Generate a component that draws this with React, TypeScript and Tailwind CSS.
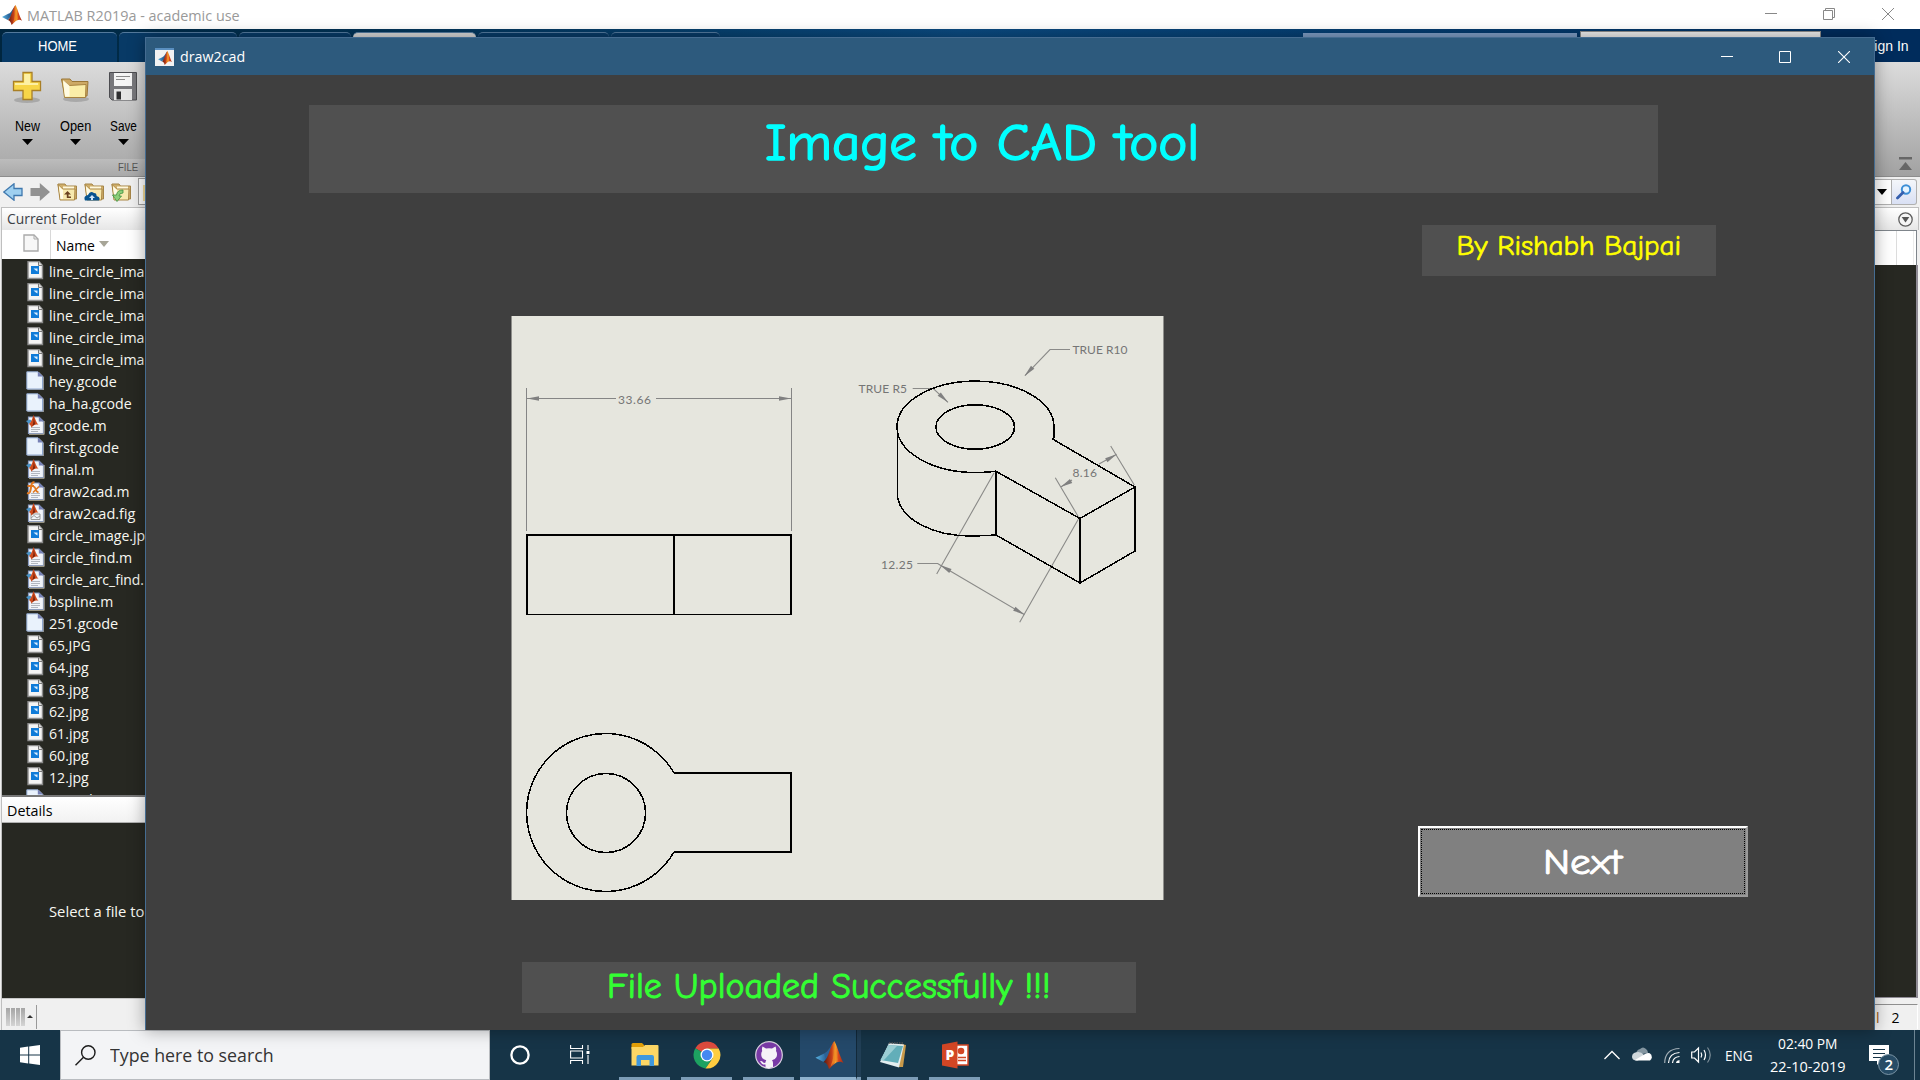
import React, { useLayoutEffect, useRef, useState } from "react";

/* Text stretched horizontally to a given width. */
function Fit({ w, className = "", children }: { w: number; className?: string; children: string }) {
  const ref = useRef<HTMLSpanElement>(null);
  const [k, setK] = useState(1);
  useLayoutEffect(() => {
    if (ref.current) setK(w / ref.current.offsetWidth);
  }, [w, children]);
  return (
    <span className={`block whitespace-nowrap ${className}`} style={{ width: w }}>
      <span ref={ref} className="inline-block origin-left" style={{ transform: `scaleX(${k})` }}>
        {children}
      </span>
    </span>
  );
}

function MatlabLogo({ className }: { className: string }) {
  return (
    <svg viewBox="0 0 26 26" className={className}>
      <defs>
        <linearGradient id="peak" x1="0" x2="1">
          <stop offset="0" stopColor="#5a1a10" />
          <stop offset=".42" stopColor="#c8401a" />
          <stop offset=".6" stopColor="#f6a62c" />
          <stop offset=".75" stopColor="#d9481c" />
          <stop offset="1" stopColor="#a02a14" />
        </linearGradient>
        <linearGradient id="wing" x1="0" x2="1">
          <stop offset="0" stopColor="#58b4e4" />
          <stop offset="1" stopColor="#1f4f86" />
        </linearGradient>
      </defs>
      <path d="M0 15.5 L8 11.5 L12 14 L7.5 19.5 Z" fill="url(#wing)" />
      <path d="M8 11.5 C12 10.5 14 4 17 1.5 L14 12 L9.5 17 Z" fill="#2c6296" />
      <path d="M17.5 0 C20 4 22.5 14 26 20.5 C21 17 17.5 21 12.5 26 C11.5 22 9.8 20 7.5 19.5 C12 17 14 3 17.5 0 Z" fill="url(#peak)" />
      <path d="M17.5 0.5 C18 8 17 16 14 24 C17 20 19 18 20.5 17.8 C19 12 18.6 5 17.5 .5 Z" fill="#f08a24" opacity=".75" />
    </svg>
  );
}

function FileIcon({ kind }: { kind: string }) {
  if (kind === "jpg")
    return (
      <svg viewBox="0 0 19 20" className="h-5 w-[19px] shrink-0">
        <path d="M2 .5 H13 L16.500 4.500 V17.500 H2 Z" fill="#f4f4f4" stroke="#8c8c8c" strokeWidth="1.4" />
        <path d="M12.5 .5 V4.500 H16.500" fill="#ddd" stroke="#777" />
        <rect x="5" y="5" width="8" height="8" fill="#0f7bd8" />
        <path d="M7.500 7.5 H11.5 V10.500 L9.8 9.5 Z" fill="#d8edff" />
      </svg>
    );
  if (kind === "doc")
    return (
      <svg viewBox="0 0 19 20" className="h-5 w-[19px] shrink-0">
        <path d="M13 1 L18 6 V19 H1.5 V18 H16 Z" fill="#8f9294" />
        <path d="M.8 .8 H12 L16.5 5.3 V18 H.8 Z" fill="#e9f2fc" stroke="#8ea6cc" strokeWidth="1" />
        <path d="M11.8 .5 V5.6 H17 Z" fill="#7680b4" />
      </svg>
    );
  return (
    <svg viewBox="0 0 19 20" className="h-5 w-[19px] shrink-0">
      <path d="M2.5 2 H13 L17.5 6.5 V18.5 H2.5 Z" fill="#f1f4f9" stroke="#8a9cc0" strokeWidth="1.2" />
      <path d="M18.2 6 V19.4 H3" fill="none" stroke="#a5a08e" />
      <path d="M12.8 1.6 V6.6 H18 Z" fill="#7680b4" />
      {kind === "fig" ? (
        <path d="M5 11 H14 V16.5 H5 Z M5 15 L8 12.5 L11 15 L14 13" fill="none" stroke="#9a9a9a" />
      ) : (
        <path d="M5 12.5 H14 M5 14.5 H14 M5 16.5 H12" stroke="#aab0b8" strokeWidth=".9" />
      )}
      {kind === "fx" ? (
        <g fill="none" stroke="#e07820" strokeWidth="2">
          <path d="M8.5 1.5 C5 .5 5.5 5 4.5 9 Q4 13 1 12 M1.5 5 H8" />
          <path d="M7 5.5 Q9 5.5 9.5 8 T12.5 11.5 M13 5.5 L7 11.5" strokeWidth="1.6" />
        </g>
      ) : (
        <g>
          <path d="M0 6 L4 4.5 L6 6 L3 9 Z" fill="#4a94c8" />
          <path d="M7.5 0 C9 3 10.5 8 12.5 10 C9.5 8.8 7.5 10.5 5.5 12.5 Q4.6 9.6 3 9 C6 7 6.5 2 7.5 0 Z" fill="#cf4a1c" />
          <path d="M7.5 1 C8 4 7.5 8 6.5 11 L9 9 Z" fill="#70220f" />
        </g>
      )}
    </svg>
  );
}

const files: [string, string, number][] = [
  ["jpg", "line_circle_ima", 95],
  ["jpg", "line_circle_ima", 95],
  ["jpg", "line_circle_ima", 95],
  ["jpg", "line_circle_ima", 95],
  ["jpg", "line_circle_ima", 95],
  ["doc", "hey.gcode", 68],
  ["doc", "ha_ha.gcode", 83],
  ["m", "gcode.m", 58],
  ["doc", "first.gcode", 70],
  ["m", "final.m", 45],
  ["fx", "draw2cad.m", 81],
  ["fig", "draw2cad.fig", 86],
  ["jpg", "circle_image.jp", 96],
  ["m", "circle_find.m", 83],
  ["m", "circle_arc_find.", 95],
  ["m", "bspline.m", 64],
  ["doc", "251.gcode", 69],
  ["jpg", "65.JPG", 42],
  ["jpg", "64.jpg", 40],
  ["jpg", "63.jpg", 40],
  ["jpg", "62.jpg", 40],
  ["jpg", "61.jpg", 40],
  ["jpg", "60.jpg", 40],
  ["jpg", "12.jpg", 40],
  ["doc", "5.gcode", 52],
];

function Caret() {
  return (
    <svg viewBox="0 0 11 6" className="h-1.5 w-[11px]">
      <path d="M0 0 H11 L5.5 6 Z" fill="#000" />
    </svg>
  );
}

function FolderShape() {
  return (
    <g>
      <path d="M1 2 H8 L9.5 4 H19.5 V17 H3.5 Z" fill="#cfae6b" stroke="#a58548" />
      <path d="M6 4.500 H17 V10 H6 Z" fill="#fff9dd" />
      <path d="M1 2.5 L5.5 7 H18 L17.5 18 H3 Z" fill="#f7e9ae" stroke="#a98544" />
      <path d="M2 4 L6 8 V17 H3.500 Z" fill="#fffbe6" />
    </g>
  );
}

function ToolButton({ label, w, children }: { label: string; w: number; children: React.ReactNode }) {
  return (
    <div className="flex w-12 shrink-0 flex-col items-center">
      <svg viewBox="0 0 30 34" className="h-[34px] w-[30px]">{children}</svg>
      <Fit w={w} className="mt-[13px] h-5 font-['Liberation_Sans'] text-[14px] leading-5 text-black">{label}</Fit>
      <div className="mt-[3px]"><Caret /></div>
    </div>
  );
}

function LeftColumn() {
  return (
    <div className="flex w-[145px] flex-col overflow-hidden bg-[#f0f0f0]">
      <div className="h-[97px] shrink-0 bg-gradient-to-b from-[#dcdcdc] to-[#adadad] pt-[7px]">
        <div className="flex w-36 pl-[3px]">
          <ToolButton label="New" w={25}>
            <ellipse cx="15" cy="31" rx="13" ry="3" fill="#000" opacity=".16" />
            <path d="M11 3.5 H20 V12.5 H28.5 V21.5 H20 V30.5 H11 V21.5 H1.5 V12.5 H11 Z" fill="#f7d548" stroke="#a97f26" strokeWidth="1.3" />
            <path d="M12.2 5 H18 V14 H26 V16 H3 V14 H12.2 Z" fill="#fdf0a4" />
          </ToolButton>
          <ToolButton label="Open" w={31}>
            <ellipse cx="16" cy="30" rx="13" ry="3" fill="#000" opacity=".16" />
            <path d="M1.5 10 H10 L12 12.5 H28 L27 27 H5 Z" fill="#cda965" stroke="#9a7636" />
            <path d="M2 10.5 L9 16.5 L26 15.5 L25.5 28.5 H4.5 Z" fill="#fbeea8" stroke="#a88340" />
            <path d="M3 11 L9.5 16.8 V27.5 H5 Z" fill="#fffbe2" />
          </ToolButton>
          <ToolButton label="Save" w={27}>
            <path d="M1.5 3.5 H28.5 V31 H4 L1.5 28.5 Z" fill="#77777b" stroke="#4c4c50" />
            <rect x="6" y="4" width="18" height="13" fill="#f5f5f5" />
            <path d="M8 7.5 H22 M8 10.5 H17" stroke="#8a8a8a" />
            <rect x="6" y="20" width="18" height="11" fill="#e4e4e4" />
            <rect x="8.500" y="22.500" width="4.500" height="8" fill="#2e2e30" />
          </ToolButton>
        </div>
      </div>
      <div className="flex h-[18px] shrink-0 justify-end border-b border-[#8d8d8d] bg-gradient-to-b from-[#bcbcbc] to-[#a9a9a9] pr-[7px]">
        <Fit w={20} className="font-['Liberation_Sans'] text-[11.500px] leading-[17px] text-[#555]">FILE</Fit>
      </div>
      <div className="flex h-[30px] shrink-0 items-center pb-px pl-[3px]">
        <svg viewBox="0 0 20 18" className="h-[18px] w-5 shrink-0"><path d="M.8 9 L11 .8 V5.500 H19 V12.500 H11 V17.200 Z" fill="#9fd0f0" stroke="#3f78ae" strokeWidth="1.300" /></svg>
        <svg viewBox="0 0 20 18" className="ml-[7px] h-[18px] w-5 shrink-0"><path d="M20 9 L9.800 0 V5 H.5 V13 H9.800 V18 Z" fill="#929292" /></svg>
        <svg viewBox="0 0 20 20" className="ml-[7px] h-5 w-5 shrink-0"><FolderShape /><path d="M10.500 9 L7 12.500 H9.800 V16 H14 V14.500 H11.500 V12.500 H14 Z" fill="#6b4220" /></svg>
        <svg viewBox="0 0 20 20" className="ml-[7px] h-5 w-5 shrink-0"><FolderShape /><path d="M1 18.500 Q-1 14 4 13 Q6 8.500 10 11 Q13 11 12.500 14 Q17 15 15 18.500 Z" fill="#07548f" /><path d="M8 13 L5 16 H7 V18 H9 V16 H11 Z" fill="#cfe6f7" /></svg>
        <svg viewBox="0 0 20 20" className="ml-[7px] h-5 w-5 shrink-0"><FolderShape /><path d="M12 8 Q6 8 5.500 13 H1.500 L6 19.500 L10.500 14 H8 Q8 11 12 11 Z" fill="#8cce78" stroke="#3f8e40" strokeWidth=".8" /></svg>
        <div className="ml-[7px] h-[27px] w-3 shrink-0 border border-[#9e9e9e] bg-white pl-1"><div className="mt-1.5 h-4 w-2 bg-[#f3dc9a]" /></div>
      </div>
      <div className="ml-px flex flex-1 flex-col border-l border-t border-[#bfbfbf]">
        <div className="h-[22px] shrink-0 bg-gradient-to-b from-white to-[#e6e6e6] pl-[5px]">
          <Fit w={94} className="font-['Open_Sans'] text-[14px] leading-[22px] text-[#3b3f46]">Current Folder</Fit>
        </div>
        <div className="flex h-[29px] shrink-0 bg-white">
          <div className="flex w-[49px] items-center justify-end border-r border-[#d8d8d8] pb-1 pr-[11px]">
            <svg viewBox="0 0 16 18" className="h-[18px] w-4"><path d="M1 1 H11 L15 5 V17 H1 Z" fill="#f7f7f7" stroke="#ababab" strokeWidth="1.400" /><path d="M11 1 V5 H15" fill="none" stroke="#ababab" /></svg>
          </div>
          <Fit w={39} className="ml-[5px] mt-1 font-['Open_Sans'] text-[15px] leading-[23px] text-black">Name</Fit>
          <svg viewBox="0 0 10 6" className="ml-1 mt-[11px] h-1.5 w-[10px]"><path d="M0 0 H10 L5 6 Z" fill="#a7a597" /></svg>
        </div>
        <div className="h-[536px] shrink-0 overflow-hidden bg-[#272822] pt-0.5">
          {files.map(([kind, name, w], i) => (
            <div key={i} className="flex h-[22px] pl-6">
              <FileIcon kind={kind} />
              <Fit w={w} className="ml-1 font-['Open_Sans'] text-[14.500px] leading-[22px] text-[#f8f8f2]">{name}</Fit>
            </div>
          ))}
        </div>
        <div className="h-[28px] shrink-0 border-b border-[#b0b0b0] border-t-2 border-t-[#777] bg-gradient-to-b from-white to-[#f2f2f2] pl-[5px]">
          <Fit w={46} className="font-['Open_Sans'] text-[14px] leading-[27px] text-black">Details</Fit>
        </div>
        <div className="flex h-[175px] shrink-0 bg-[#272822] pl-[47px] pt-[78px]">
          <Fit w={95} className="font-['Open_Sans'] text-[14px] leading-[22px] text-[#f8f8f2]">Select a file to</Fit>
        </div>
        <div className="flex h-[32px] items-center border-t border-[#c8c8c8] bg-[#f0f0f0] pl-1 pt-1">
          <div className="flex h-[18px] gap-px">
            {[0, 1, 2, 3].map((i) => <div key={i} className="w-1 bg-gradient-to-b from-[#a5a5a5] to-[#d5d5d5]" />)}
          </div>
          <svg viewBox="0 0 6 3" className="ml-[2px] h-[3px] w-1.5"><path d="M0 3 H6 L3 0 Z" fill="#333" /></svg>
          <div className="ml-[3px] h-6 w-px bg-[#999]" />
        </div>
      </div>
    </div>
  );
}

function RightColumn() {
  return (
    <div className="flex w-[45px] flex-col overflow-hidden bg-[#f0f0f0]">
      <div className="flex h-[115px] shrink-0 items-end justify-end border-b border-[#8d8d8d] bg-gradient-to-b from-[#dcdcdc] to-[#a2a2a2] pb-1.5 pr-2">
        <svg viewBox="0 0 13 13" className="h-[13px] w-[13px]"><path d="M0 0 H13 V2.500 H0 Z M6.500 5 L13 13 H0 Z" fill="#666" /></svg>
      </div>
      <div className="flex h-[30px] shrink-0 pr-[3px] pt-0.5">
        <div className="flex h-[26px] w-[17px] items-center border-y border-r border-[#b0b0b0] bg-white pl-0.5">
          <svg viewBox="0 0 10 6" className="h-1.5 w-[10px]"><path d="M0 0 H10 L5 6 Z" fill="#000" /></svg>
        </div>
        <div className="flex h-[26px] flex-1 items-center justify-center rounded-r-[3px] border-y border-r border-[#b0b0b0] bg-gradient-to-b from-[#f4f6fa] to-[#d9e0f4]">
          <svg viewBox="0 0 16 16" className="h-4 w-4"><circle cx="10" cy="5.500" r="4.200" fill="#e6f4ff" stroke="#3d8fd6" strokeWidth="2" /><path d="M7 8.500 L1.500 14" stroke="#355fae" strokeWidth="2.800" strokeLinecap="round" /></svg>
        </div>
      </div>
      <div className="mr-px flex h-[23px] shrink-0 items-center justify-end border-r border-t border-[#bfbfbf] bg-gradient-to-b from-white to-[#e6e6e6] pr-[5px]">
        <svg viewBox="0 0 15 15" className="h-[15px] w-[15px]"><circle cx="7.500" cy="7.500" r="6.700" fill="#f5f5f5" stroke="#5c5c5c" strokeWidth="1.300" /><path d="M3.700 5 H11.300 L7.500 10.500 Z" fill="#555" /></svg>
      </div>
      <div className="mr-[3px] flex h-[35px] shrink-0 border-r border-t border-[#7f858b] bg-white pr-0.5">
        <div className="w-[22px] border-r border-[#dcdcdc]" />
        <div className="flex-1 border-r border-[#ececec]" />
      </div>
      <div className="mr-[2px] h-[733px] shrink-0 border-b border-r-2 border-[#8f8b95] bg-[#272822]" />
      <div className="mr-0.5 mt-1.5 flex h-[25px] border-t border-[#8f8f8f] border-r border-r-white bg-[#f0f0f0] pl-px">
        <span className="font-['Open_Sans'] text-[14px] leading-[26px] text-[#a0560c]">l</span>
        <span className="ml-[12px] font-['Open_Sans'] text-[14px] leading-[26px] text-black">2</span>
      </div>
    </div>
  );
}

function Tab({ className }: { className: string }) {
  return <div className={`h-[31px] rounded-t-[5px] border-t border-[#53799c] ${className}`} />;
}

function MatlabWindow() {
  return (
    <div className="flex h-[1030px] flex-col">
      <div className="flex h-[29px] items-center bg-white pl-0.5">
        <MatlabLogo className="h-5 w-5" />
        <Fit w={213} className="ml-[5px] font-['Open_Sans'] text-[15px] leading-[28px] text-[#999]">MATLAB R2019a - academic use</Fit>
        <div className="ml-auto flex items-center pb-px pr-[26px]">
          <svg viewBox="0 0 12 12" className="mr-[46px] h-3 w-3"><path d="M0 5.500 H12" stroke="#888" /></svg>
          <svg viewBox="0 0 12 12" className="mr-[47px] h-3 w-3"><path d="M.5 2.500 H9.500 V11.500 H.5 Z M2.500 2.500 V.5 H11.500 V9.500 H9.500" fill="none" stroke="#888" /></svg>
          <svg viewBox="0 0 12 12" className="h-3 w-3"><path d="M0 0 L12 12 M12 0 L0 12" stroke="#888" /></svg>
        </div>
      </div>
      <div className="flex h-[33px] bg-gradient-to-r from-[#00263f] via-[#0b4a80] to-[#002c5c] pl-0.5 pt-[3px]">
        <div className="flex h-[30px] w-[115px] justify-center rounded-t-[5px] border-t border-[#53799c] bg-[#083a66] pr-[3px]">
          <Fit w={39} className="font-['Liberation_Sans'] text-[14px] leading-[26px] text-white">HOME</Fit>
        </div>
        <Tab className="ml-0.5 w-[118px] bg-[#083a66]" />
        <Tab className="ml-0.5 w-[112px] bg-[#083a66]" />
        <Tab className="ml-0.5 w-[123px] bg-[#d6d6d6]" />
        <Tab className="ml-0.5 w-[131px] bg-[#083a66]" />
        <Tab className="ml-0.5 w-[110px] bg-[#083a66]" />
        <div className="ml-[583px] mt-px h-6 w-[274px] bg-[#7d9cc4]" />
        <div className="ml-[3px] -mt-px h-6 w-[241px] border border-[#8a8a8a] bg-[#ececec]" />
        <div className="ml-auto -mt-[3px] flex h-[33px] w-[99px] justify-end bg-[#002c5c] pr-[11px]">
          <Fit w={44} className="pt-px font-['Liberation_Sans'] text-[14px] leading-[33px] text-white">Sign In</Fit>
        </div>
      </div>
      <div className="flex min-h-0 flex-1">
        <LeftColumn />
        <div className="flex-1 bg-[#272822]" />
        <RightColumn />
      </div>
    </div>
  );
}

/* Filled arrowhead with its tip at (x, y), pointing along angle a in degrees. */
function Arrow({ x, y, a }: { x: number; y: number; a: number }) {
  return <path d="M0 0 L-12 -2.300 L-12 2.300 Z" transform={`translate(${x} ${y}) rotate(${a})`} fill="#808080" />;
}

function Dim({ x, y, w, children }: { x: number; y: number; w: number; children: string }) {
  return (
    <text x={x} y={y} textLength={w} fontFamily="Lato, sans-serif" fontWeight="400" fontSize="12" fill="#757575">
      {children}
    </text>
  );
}

function Drawing() {
  return (
    <svg viewBox="511 316 653 584" className="block h-[584px] w-[653px] bg-[#e6e6de]">
      <path d="M511.500 316 V900 M1163.500 316 V900" stroke="#8f8f8b" shapeRendering="crispEdges" />
      <g fill="none" stroke="#858585" strokeWidth="1" shapeRendering="crispEdges">
        <path d="M526.500 388 V531 M791.500 388 V531" />
        <path d="M527 398.500 H616 M656 398.500 H791" />
      </g>
      <g fill="none" stroke="#8a8a88" strokeWidth="1.100">
        <path d="M994 473 L936.700 574 M1078.300 519.300 L1019.700 622.300 M940 565 L1024.700 614.700" />
        <path d="M917.300 563.500 H937.700 L940 565" />
        <path d="M1110.700 446 L1134.300 485 M1055.300 477.700 L1078.300 516.700 M1116.700 454.300 L1099 464 M1060.700 487 L1072 480" />
        <path d="M1070 349.500 H1050 L1025 375.700 M912.700 388.500 H933.300 L948 402.300" />
      </g>
      <Arrow x={527} y={398.500} a={180} />
      <Arrow x={791} y={398.500} a={0} />
      <Arrow x={940} y={565} a={210} />
      <Arrow x={1024.700} y={614.700} a={30} />
      <Arrow x={1116.700} y={454.300} a={-30} />
      <Arrow x={1060.700} y={487} a={150} />
      <Arrow x={1024.500} y={376} a={133} />
      <Arrow x={948} y={402.300} a={43} />
      <g fill="none" stroke="#000" strokeWidth="2" shapeRendering="crispEdges">
        <path d="M527 614 V535 H791 V614 M674 535 V614" />
        <path d="M526 614.500 H792" strokeWidth="1" />
      </g>
      <g fill="none" stroke="#000" strokeWidth="1.500" shapeRendering="crispEdges">
        <ellipse cx="975.200" cy="427" rx="39.300" ry="22.200" />
        <path d="M996 471.300 Q985 472.600 975.500 472.500 A78.500 45.700 0 1 1 1054 427 V437 L1052.500 439 L1135 487 L1080 518.500 L996 471.300 V535 L1080 583 L1135 551 V487 M1080 518.500 V583" />
        <path d="M897.300 427 V493 C898 520 935 537 975 536 L996 535" />
        <circle cx="606" cy="813" r="39.500" />
        <path d="M674 773 A79 79 0 1 0 674 852" />
        <path d="M674 773 H791 V852 H674" strokeWidth="2" />
      </g>
      <Dim x={618} y={404} w={33}>33.66</Dim>
      <Dim x={1072.500} y={354} w={55}>TRUE R10</Dim>
      <Dim x={858.500} y={393} w={48.500}>TRUE R5</Dim>
      <Dim x={1072.500} y={477} w={24.500}>8.16</Dim>
      <Dim x={881} y={568.500} w={32}>12.25</Dim>
    </svg>
  );
}

function AppWindow() {
  return (
    <div className="absolute left-[145px] top-[37px] flex h-[993px] w-[1730px] flex-col border-x border-t border-[#456c91] bg-[#3f3f3f] shadow-[0_0_16px_rgba(0,0,0,0.35)]">
      <div className="flex h-[37px] shrink-0 items-center bg-[#2d5a7d] pl-[9px]">
        <div className="flex h-[18px] w-[19px] items-center justify-center border-t-2 border-[#5a8fc0] bg-[#f2f2f2]">
          <MatlabLogo className="h-[14px] w-[14px]" />
        </div>
        <Fit w={65} className="ml-1.5 font-['Open_Sans'] text-[14.500px] leading-9 text-white">draw2cad</Fit>
        <div className="ml-auto flex pr-6">
          <svg viewBox="0 0 12 12" className="mr-[46px] h-3 w-3"><path d="M0 5.500 H12" stroke="#fff" /></svg>
          <svg viewBox="0 0 12 12" className="mr-[47px] h-3 w-3"><path d="M.5 .5 H11.500 V11.500 H.5 Z" fill="none" stroke="#fff" /></svg>
          <svg viewBox="0 0 12 12" className="h-3 w-3"><path d="M0 0 L12 12 M12 0 L0 12" stroke="#fff" strokeWidth="1.100" /></svg>
        </div>
      </div>
      <div className="ml-[163px] mt-[30px] flex h-[88px] w-[1349px] shrink-0 justify-center bg-[#505050] pr-1">
        <Fit w={434} className="font-['Comic_Sans_MS','Comic_Neue',cursive] text-[53px] leading-[76px] text-[#00ffff] [-webkit-text-stroke:1.6px_#00ffff]">Image to CAD tool</Fit>
      </div>
      <div className="ml-[1276px] mt-8 flex h-[51px] w-[294px] shrink-0 justify-center bg-[#505050]">
        <Fit w={225} className="font-['Comic_Sans_MS','Comic_Neue',cursive] text-[29px] leading-[41px] text-[#ffff00] [-webkit-text-stroke:0.7px_#ffff00]">By Rishabh Bajpai</Fit>
      </div>
      <div className="mt-10 flex shrink-0 items-end">
        <div className="ml-[365px]"><Drawing /></div>
        <div className="mb-[3px] ml-[254px] h-[71px] w-[330px] border-2 border-b-[#9a9a9a] border-l-white border-r-[#9a9a9a] border-t-white bg-[#808080] p-px">
          <div className="flex h-full justify-center border border-dotted border-black pr-0.5">
            <Fit w={79} className="font-['Comic_Sans_MS','Comic_Neue',cursive] text-[36px] leading-[66px] text-white [-webkit-text-stroke:0.9px_#fff]">Next</Fit>
          </div>
        </div>
      </div>
      <div className="ml-[376px] mt-[62px] flex h-[51px] w-[614px] shrink-0 justify-center bg-[#505050]">
        <Fit w={444} className="font-['Comic_Sans_MS','Comic_Neue',cursive] text-[36px] leading-[49px] text-[#33ff33] [-webkit-text-stroke:0.9px_#33ff33]">File Uploaded Successfully !!!</Fit>
      </div>
    </div>
  );
}

function TaskItem({ className = "", children }: { className?: string; children: React.ReactNode }) {
  return (
    <div className={`flex h-[50px] w-[51px] shrink-0 flex-col items-center border-b-[3px] border-[#7c9cb6] pt-[11px] ${className}`}>
      <svg viewBox="0 0 28 28" className="h-7 w-7">{children}</svg>
    </div>
  );
}

function Taskbar() {
  return (
    <div className="flex h-[50px] bg-[#163447] text-white">
      <div className="flex w-[60px] items-center justify-center">
        <svg viewBox="0 0 20 20" className="h-5 w-5" fill="#fff"><path d="M0 2.800 L8.200 1.600 V9.500 H0 Z M9.200 1.500 L20 0 V9.500 H9.200 Z M0 10.500 H8.200 V18.400 L0 17.200 Z M9.200 10.500 H20 V20 L9.200 18.500 Z" /></svg>
      </div>
      <div className="flex w-[430px] border border-[#b9bcc0] bg-[#f3f4f6] pl-3.5">
        <svg viewBox="0 0 21 21" className="mt-3.5 h-[21px] w-[21px]" fill="none" stroke="#1b1b1b" strokeWidth="1.400"><circle cx="13.300" cy="7.500" r="6.700" /><path d="M8.500 12.300 L.5 20.300" /></svg>
        <Fit w={164} className="ml-[14px] font-['Open_Sans'] text-[18px] leading-[49px] text-[#333]">Type here to search</Fit>
      </div>
      <svg viewBox="0 0 20 20" className="ml-5 mt-[15px] h-5 w-5"><circle cx="10" cy="10" r="8.600" fill="none" stroke="#fff" strokeWidth="2.300" /></svg>
      <svg viewBox="0 0 20 19" className="ml-10 mt-[15px] h-[19px] w-5" fill="none" stroke="#fff" strokeWidth="1.100"><path d="M.6 0 V3.500 H12.500 V0 M.6 19 V15.500 H12.500 V19 M.6 6 H12.500 V13 H.6 Z M18 0 V5 M18 10 V19" /><path d="M16.500 6 H19.500 V9 H16.500 Z" fill="#fff" stroke="none" /></svg>
      <div className="ml-[29px] flex">
        <TaskItem className="border-r-0">
          <path d="M.5 3.500 Q.5 2 2 2 H11 L13 4 V8 H.5 Z" fill="#e3a008" />
          <path d="M.5 6 H12 L14 4 H26.500 Q27.500 4 27.500 5 V24.500 H.5 Z" fill="#fdd765" />
          <path d="M5.500 25 V16 Q5.500 14 7.500 14 H21 Q23 14 23 16 V25 H18.500 V19 H10 V25 Z" fill="#3f98dd" />
        </TaskItem>
      </div>
      <TaskItem className="ml-[11px]">
        <path d="M14 14 L2.300 7.200 A13.500 13.500 0 0 1 25.700 7.500 L14 7.500 Z" fill="#dd4b3e" />
        <path d="M14 14 L2.300 7.200 A13.500 13.500 0 0 0 12.500 27.400 L19.500 17 Z" fill="#1da261" />
        <path d="M14 7.500 L25.700 7.500 A13.500 13.500 0 0 1 12.500 27.400 L19.500 17.500 Z" fill="#ffcd40" />
        <circle cx="14" cy="14" r="6.500" fill="#fff" /><circle cx="14" cy="14" r="5.200" fill="#4688f1" />
      </TaskItem>
      <TaskItem className="ml-[11px]">
        <circle cx="14" cy="14" r="13.300" fill="#793aa6" stroke="#d9d3df" strokeWidth="1.200" />
        <path d="M7.500 5.500 L11 7.500 Q14 7 17 7.500 L20.500 5.500 Q21.500 8 21 10 Q22.800 12.500 21.500 16 Q20 18.800 17 19.300 Q18 20.500 18 22 V26 Q14 28 10.500 26.500 V23.500 Q7 24 6 21.500 L5 20 Q7 19.500 8 21.300 Q9 22.300 10.500 21.600 Q10.500 20 11.300 19.300 Q8 18.800 6.700 16 Q5.500 12.500 7.200 10 Q6.600 8 7.500 5.500 Z" fill="#f5f2f7" />
      </TaskItem>
      <div className="ml-1.5 flex h-[50px] w-[61px] shrink-0">
        <div className="h-full w-14 border-b-[3px] border-[#8fb2cf] bg-[#24496a] pl-[15px] pt-[11px]"><MatlabLogo className="h-7 w-[29px]" /></div>
        <div className="h-full flex-1 border-b-[3px] border-l border-b-[#7c9cb6] border-l-[#12293a] bg-[#213f56]" />
      </div>
      <TaskItem className="ml-1.5">
        <path d="M22 3 L27 4 L24 26 L20 26 Z" fill="#c99a4a" />
        <path d="M10 2 L25 3.500 L20 26.500 L1 21 Z" fill="#e4eef0" />
        <path d="M9.500 4 L24 5 L19 22 L1.500 19 Z" fill="#62aeb9" />
        <path d="M9.500 4 L18 5 L5 19 L1.500 19 Z" fill="#b4dce0" opacity=".7" />
        <path d="M10 2 H25" stroke="#555" strokeWidth="1.500" strokeDasharray="1.500 1" />
      </TaskItem>
      <TaskItem className="ml-[11px]">
        <rect x="14" y="4" width="13" height="20" fill="#fff" stroke="#d24625" strokeWidth="1.500" />
        <circle cx="20" cy="10" r="3.300" fill="#d24625" /><path d="M17 16.500 H25 M17 19.500 H25" stroke="#d24625" strokeWidth="1.500" />
        <path d="M1 3.500 L16.500 .5 V27.500 L1 24.500 Z" fill="#d24625" />
        <text x="4.500" y="19" fontFamily="Open Sans, sans-serif" fontWeight="800" fontSize="14" fill="#fff">P</text>
      </TaskItem>
      <div className="ml-auto flex">
        <svg viewBox="0 0 16 10" className="mt-5 h-2.5 w-4"><path d="M.5 9 L8 1.500 L15.500 9" fill="none" stroke="#fff" strokeWidth="1.300" /></svg>
        <svg viewBox="0 0 20 14" className="ml-3 mt-[17px] h-3.5 w-5"><path d="M4 8 Q4 3 8 2 Q11 -1 14 2 Q16 3.500 16 6 Z" fill="#8496a1" /><path d="M2 6 Q8 3 12 8 L6 13.500 H3.500 Q0 13 0 9.500 Q0 7 2 6 Z" fill="#cfd7db" /><path d="M3 13 L13 7 Q17 5 19 7.500 Q21 11 18 13.500 H4 Z" fill="#fff" /></svg>
        <svg viewBox="0 0 17 17" className="ml-3 mt-[17px] h-[17px] w-[17px]" fill="none" stroke="#fff" strokeWidth="1.200"><path d="M.7 16 Q1 2 15.500 1.500" opacity=".6" /><path d="M4.500 16 Q5 6 15.500 5.500 M8.500 16 Q9 10 15.500 9.500" /><path d="M12 16 Q12 13.500 15.500 13 V16 Z" fill="#fff" stroke="none" /></svg>
        <svg viewBox="0 0 21 18" className="ml-2.5 mt-4 h-[18px] w-[21px]" fill="none" stroke="#fff" strokeWidth="1.200"><path d="M.7 6 H3.500 L7.500 2 V16 L3.500 12 H.7 Z M10 6.500 Q11.500 9 10 11.500 M13 4 Q16 9 13 14" /><path d="M16.500 1.500 Q22 9 16.500 16.500" opacity=".45" /></svg>
        <Fit w={28} className="ml-[13px] font-['Open_Sans'] text-[15px] leading-[51px]">ENG</Fit>
        <div className="ml-4 flex w-[78px] flex-col items-center font-['Open_Sans'] text-[14.500px]">
          <Fit w={60} className="h-[23px] leading-[27px]">02:40 PM</Fit>
          <Fit w={76} className="h-[23px] leading-[27px]">22-10-2019</Fit>
        </div>
        <svg viewBox="0 0 31 31" className="ml-[22px] mt-3.5 h-[31px] w-[31px]">
          <path d="M0 1 H20 V17 H12 L8 21 V17 H0 Z" fill="#fff" />
          <path d="M4 5.500 H16 M4 9.500 H16 M4 13.500 H14" stroke="#163447" strokeWidth="1.200" />
          <circle cx="19.500" cy="20.500" r="10" fill="#274c66" stroke="#7b94a5" />
          <text x="15.500" y="26" fontFamily="Open Sans, sans-serif" fontWeight="600" fontSize="15" fill="#fff">2</text>
        </svg>
        <div className="ml-3.5 mr-[5px] h-full w-px bg-[#6d8493]" />
      </div>
    </div>
  );
}

export default function App() {
  return (
    <div className="relative h-[1080px] w-[1920px] overflow-hidden bg-[#f0f0f0]">
      <MatlabWindow />
      <AppWindow />
      <Taskbar />
    </div>
  );
}
